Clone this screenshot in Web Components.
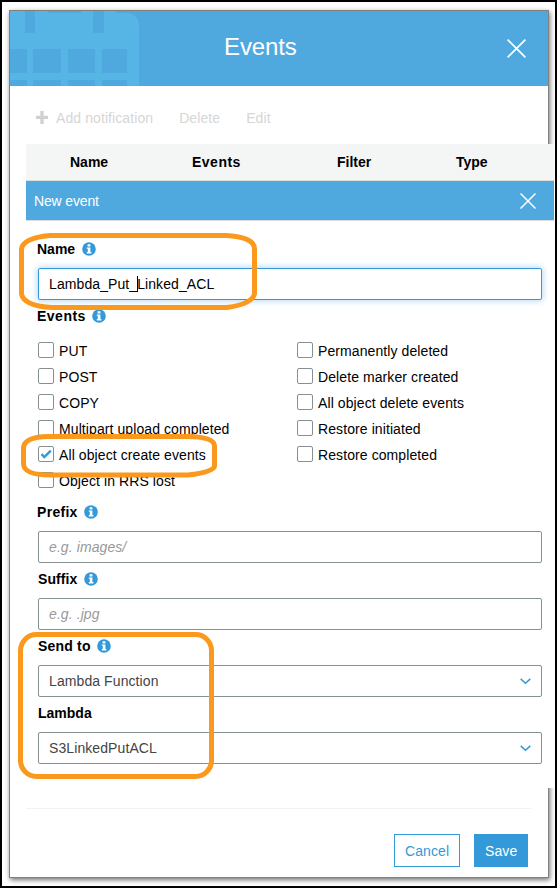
<!DOCTYPE html>
<html lang="en">
<head>
<meta charset="utf-8">
<title>Events</title>
<style>
html{height:100%}
body{margin:0;box-sizing:border-box;width:557px;height:888px;border:2px solid #000;padding:8px 6px 8px 7px;background:#fff;overflow:hidden;position:relative;font:14px/16px "Liberation Sans",Arial,sans-serif;letter-spacing:.09px;color:#000}
</style>
</head>
<body>
<events-dialog></events-dialog>
<callout-marks></callout-marks>
<script>
const define = (name, html, setup) => customElements.define(name, class extends HTMLElement {
  connectedCallback() {
    if (this.shadowRoot) return;
    this.attachShadow({mode: 'open'}).innerHTML = html;
    if (setup) setup(this, this.shadowRoot);
  }
});

define('close-icon', `<style>:host{display:block;width:var(--s,19px);height:var(--s,19px)}svg{display:block;width:100%;height:100%}</style>
<svg viewBox="0 0 19 19"><path d="M.6.6 18.4 18.4M18.4.6.6 18.4" fill="none" stroke="#fff" stroke-width="1.7"/></svg>`);

define('info-icon', `<style>:host{display:block;width:14px;height:14px}svg{display:block}</style>
<svg width="14" height="14" viewBox="0 0 14 14"><circle cx="7" cy="7" r="6.8" fill="#3399d8"/><path d="M5.6 2.3h2.8v2.2H5.600zM4.800 5.400h3.600v4.600h1v1.500H4.800V10h1V6.800H4.800z" fill="#fff"/></svg>`);

define('dialog-header', `<style>
:host{display:grid;grid-template-columns:130px 1fr 130px;height:75px;flex:none;background:#4fa9de;color:#fff}
h1{margin:0;font:24px/28px "Liberation Sans",Arial,sans-serif;letter-spacing:-.1px;padding:22px 0 0 84px}
.art{display:block}close-icon{justify-self:end;margin:28px 22px 0 0}
</style>
<svg class="art" width="130" height="75" viewBox="10 11 130 75"><path fill="#57b5e5" d="M10 11H25V33H35V11H48V13H81V11H93V33H104V11H116V13H127Q139 14 139 26V86H10Z"/><path fill="#4fa9de" d="M10 49H27V73H10ZM33 49H61V73H33ZM68 49H95V73H68ZM102 49H127V73H102ZM10 80H27V86H10ZM33 80H61V86H33ZM68 80H95V86H68ZM102 80H127V86H102Z"/></svg>
<h1><slot></slot></h1><close-icon></close-icon>`);

define('action-bar', `<style>
:host{display:flex;height:58px;flex:none;box-sizing:border-box;padding:24px 0 0 26px;color:#d5d6d6}
svg{margin:1px 8px 0 0}span{margin-right:26px}
</style>
<svg width="12" height="13" viewBox="0 0 12 13"><path d="M4.3 0h3.4v4.7H12v3.4H7.7V13H4.3V8.1H0V4.700h4.300z" fill="#d0d2d2"/></svg>
<span>Add notification</span><span>Delete</span><span>Edit</span>`);

define('event-table', `<style>
:host{display:block}
.head{display:grid;grid-template-columns:122px 145px 119px 1fr;height:36px;padding-left:44px;background:#f4f6f5;border-bottom:1px solid #dcdcdc;font-weight:bold;line-height:37px;letter-spacing:0}
.wide{letter-spacing:.5px}
.row{display:flex;justify-content:space-between;align-items:center;height:39px;padding:0 18px 0 8px;background:#4fa9de;border-bottom:1px solid #dcdcdc;color:#fff;letter-spacing:-.15px}
close-icon{--s:16px}.row span{padding-top:1px}
</style>
<div class="head"><span>Name</span><span class="wide">Events</span><span>Filter</span><span>Type</span></div>
<div class="row"><span>New event</span><close-icon></close-icon></div>`);

define('field-label', `<style>
:host{display:flex;height:16px;padding:8px 0 11px;margin-left:-1px;font-weight:bold;letter-spacing:var(--track,0)}
info-icon{margin:1px 0 0 6.5px}
</style><slot></slot>`, (el, root) => {
  if (el.hasAttribute('info')) root.append(document.createElement('info-icon'));
});

define('text-box', `<style>
:host{display:flex;align-items:center;justify-content:space-between;box-sizing:border-box;height:32px;padding:0 10px;border:1px solid #879090;border-radius:2px;background:#fff}
:host([focused]){border-color:#3399d8;box-shadow:0 0 6px 1px #b5d8f5}
:host([hint]){color:#999;font-style:italic}
:host([select]){color:#444}
:host(:not([select])) svg{display:none}
</style><span><slot></slot></span>
<svg width="11" height="7" viewBox="0 0 11 7"><path d="M.7.9 5.5 5.2 10.3.9" fill="none" stroke="#3399d8" stroke-width="1.5"/></svg>`);

define('text-caret', `<style>:host{display:inline-block;width:1px;height:16px;margin:0 -1px 0 0;background:#000;vertical-align:-3px}</style>`);

define('check-option', `<style>
:host{display:flex;height:16px;gap:5px}
i{box-sizing:border-box;width:16px;height:16px;border:1px solid #879090;border-radius:2px;background:#fff}
svg{display:none}:host([checked]) svg{display:block}
span{padding-top:1px;white-space:nowrap}
</style><i><svg width="14" height="14" viewBox="0 0 14 14"><path d="M2.5 7.2 5.3 10 11.8 3.700" fill="none" stroke="#3399d8" stroke-width="2.4"/></svg></i><span><slot></slot></span>`);

define('push-button', `<style>
:host{display:block;box-sizing:border-box;height:33px;border:1px solid #3399d8;padding:0 10px;line-height:33px;color:#3399d8;text-align:center}
:host([primary]){background:#3399d8;color:#fff}
</style><slot></slot>`);

define('event-form', `<style>
:host{display:block;padding:12px 12px 0}
.checks{display:grid;grid-template-columns:259px 1fr;margin:7px 0 8px}
.checks>div{display:flex;flex-direction:column;gap:10px}
.events{--track:.5px}.prefix{--track:.3px}.suffix{--track:.1px;margin-left:0}.send{--track:.2px;margin-left:0}.lambda{margin-left:0}
</style>
<field-label info>Name</field-label>
<text-box focused>Lambda_Put_<text-caret></text-caret>Linked_ACL</text-box>
<field-label class="events" info>Events</field-label>
<div class="checks"><div>
<check-option>PUT</check-option><check-option>POST</check-option><check-option>COPY</check-option><check-option>Multipart upload completed</check-option><check-option checked>All object create events</check-option><check-option>Object in RRS lost</check-option>
</div><div>
<check-option>Permanently deleted</check-option><check-option>Delete marker created</check-option><check-option>All object delete events</check-option><check-option>Restore initiated</check-option><check-option>Restore completed</check-option>
</div></div>
<field-label class="prefix" info>Prefix</field-label><text-box hint>e.g. images/</text-box>
<field-label class="suffix" info>Suffix</field-label><text-box hint>e.g. .jpg</text-box>
<field-label class="send" info>Send to</field-label><text-box select>Lambda Function</text-box>
<field-label class="lambda">Lambda</field-label><text-box select>S3LinkedPutACL</text-box>`);

define('events-dialog', `<style>
:host{display:flex;flex-direction:column;box-sizing:border-box;width:540px;height:868px;border:1px solid #808080;box-shadow:1px 2px 5px rgba(0,0,0,.55);background:#fff}
.pane{flex:none;width:528px;height:644px;margin-left:16px;background:#fff;box-shadow:1px 0 #fff}
footer{display:flex;justify-content:flex-end;margin:20px 16px 0;border-top:1px solid #f3f3f3;padding:25px 4px 0 0;gap:14px}
.cancel{width:66px}.save{width:54px}
</style>
<dialog-header>Events</dialog-header>
<action-bar></action-bar>
<div class="pane"><event-table></event-table><event-form></event-form></div>
<footer><push-button class="cancel">Cancel</push-button><push-button class="save" primary>Save</push-button></footer>`);

// Hand-drawn orange highlights lying over the dialog.
define('callout-marks', `<style>:host{position:absolute;left:-2px;top:-2px;width:557px;height:888px;pointer-events:none}svg{display:block}</style>
<svg width="557" height="888" viewBox="0 0 557 888" fill="none" stroke="#fa991e" stroke-width="5">
<path d="M50 235.500H226Q254.500 237 254.500 249V294Q252 304 227 307.500H52Q24 306 21.500 294V249Q23 238 50 235.500Z"/>
<path d="M48 436.500H188Q214.500 437 214.500 446V466Q214 472 188 475H50Q24 475 23.500 464V448Q24 437 48 436.500Z"/>
<rect x="20.5" y="634.5" width="191" height="142" rx="16"/>
</svg>`);
</script>
</body>
</html>
